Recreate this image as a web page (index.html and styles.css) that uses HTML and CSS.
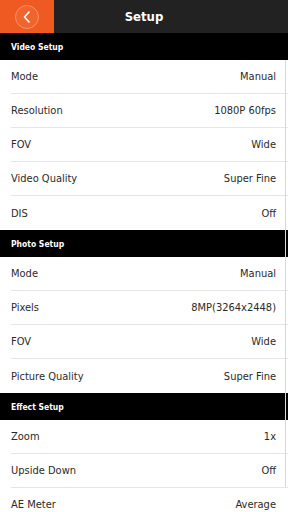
FILE: index.html
```html
<!DOCTYPE html>
<html lang="en">
<head>
  <meta charset="UTF-8">
  <title>Setup</title>
  <link rel="stylesheet" href="styles.css">
</head>
<body>
  <div class="screen">
    <div class="top-bar">
      <div class="back">
        <svg width="26" height="26" viewBox="0 0 26 26">
          <circle cx="13" cy="13" r="11.5" fill="#f2642e" stroke="#f7926a" stroke-width="1"/>
          <path d="M15 8 L10.5 13 L15 18" fill="none" stroke="#fff" stroke-width="1.6" stroke-linecap="round" stroke-linejoin="round"/>
        </svg>
      </div>
      <div class="title">Setup</div>
    </div>

    <div class="list">
      <!-- Video -->
      <div class="section">Video Setup</div>
      <div class="row"><span>Mode</span><span>Manual</span></div>
      <div class="row"><span>Resolution</span><span>1080P 60fps</span></div>
      <div class="row"><span>FOV</span><span>Wide</span></div>
      <div class="row"><span>Video Quality</span><span>Super Fine</span></div>
      <div class="row"><span>DIS</span><span>Off</span></div>

      <!-- Photo -->
      <div class="section">Photo Setup</div>
      <div class="row"><span>Mode</span><span>Manual</span></div>
      <div class="row"><span>Pixels</span><span>8MP(3264x2448)</span></div>
      <div class="row"><span>FOV</span><span>Wide</span></div>
      <div class="row"><span>Picture Quality</span><span>Super Fine</span></div>

      <!-- Effect -->
      <div class="section">Effect Setup</div>
      <div class="row"><span>Zoom</span><span>1x</span></div>
      <div class="row"><span>Upside Down</span><span>Off</span></div>
      <div class="row"><span>AE Meter</span><span>Average</span></div>
    </div>

    <div class="scroll-line"></div>
  </div>
</body>
</html>
```

FILE: styles.css
```css
body {
  margin: 0;
  padding: 0;
  background-color: white;
  font-family: 'Liberation Sans Narrow', 'DejaVu Sans Condensed', 'Liberation Sans', sans-serif;
  font-stretch: condensed;
  overflow: hidden;
}
.screen {
  width: 288px;
  height: 512px;
  position: relative;
  overflow: hidden;
}
.top-bar {
  height: 33px;
  background-color: #222;
  display: flex;
  align-items: center;
  position: relative;
}
.back {
  width: 54px;
  height: 33px;
  background-color: #ef5a22;
  display: flex;
  align-items: center;
  justify-content: center;
}
.back svg {
  display: block;
}
.title {
  position: absolute;
  left: 0;
  right: 0;
  text-align: center;
  color: white;
  font-weight: bold;
  font-size: 13px;
  pointer-events: none;
}
.section {
  height: 27px;
  background-color: black;
  color: white;
  font-weight: bold;
  font-size: 8.5px;
  display: flex;
  align-items: center;
  padding-left: 11px;
}
.row {
  height: 34px;
  display: flex;
  align-items: center;
  justify-content: space-between;
  margin-left: 11px;
  padding-right: 12px;
  font-size: 11px;
  color: #2a2a2a;
  border-bottom: 1px solid #e6e6e6;
  box-sizing: border-box;
}
.row:has(+ .section) {
  border-bottom: none;
}
.scroll-line {
  position: absolute;
  left: 285px;
  top: 60px;
  width: 1px;
  height: 427px;
  background-color: #d8d8d8;
}
```
